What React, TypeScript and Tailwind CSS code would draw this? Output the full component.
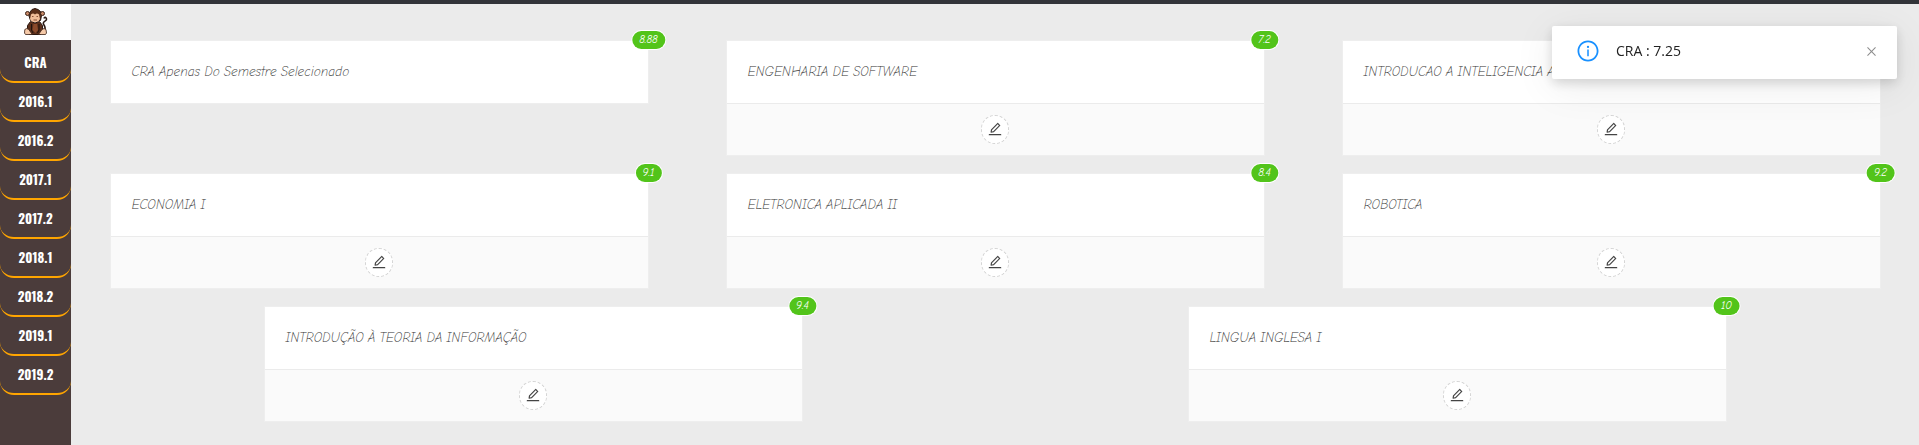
import { AiOutlineClose, AiOutlineEdit, AiOutlineInfoCircle } from "react-icons/ai";

type Course = { name: string; grade: string; editable: boolean };

const semesters = ["CRA", "2016.1", "2016.2", "2017.1", "2017.2", "2018.1", "2018.2", "2019.1", "2019.2"];

const courses: Course[] = [
  { name: "CRA Apenas Do Semestre Selecionado", grade: "8.88", editable: false },
  { name: "ENGENHARIA DE SOFTWARE", grade: "7.2", editable: true },
  { name: "INTRODUCAO A INTELIGENCIA ARTIFICIAL", grade: "8.9", editable: true },
  { name: "ECONOMIA I", grade: "9.1", editable: true },
  { name: "ELETRONICA APLICADA II", grade: "8.4", editable: true },
  { name: "ROBOTICA", grade: "9.2", editable: true },
  { name: "INTRODUÇÃO À TEORIA DA INFORMAÇÃO", grade: "9.4", editable: true },
  { name: "LINGUA INGLESA I", grade: "10", editable: true },
];

function Monkey() {
  return (
    <svg viewBox="0 0 24 28" className="h-7 w-6" role="img" aria-label="Logo">
      <path d="M17 25c4 0 4.500-2.500 4-5.500s-2.500-3-1.500-5 3.500-1.500 3-3.500-2-2.500-2.500-.5" fill="none" stroke="#2a1a14" strokeWidth="1.600" />
      <path d="M8 1.500 11 .5l3 1 2.500 2 1 4-1 5h-10L5 8l1-4z" fill="#5b2f1b" stroke="#2a1710" strokeWidth="1" />
      <circle cx="3.500" cy="5.500" r="2" fill="#c98a68" stroke="#3a2015" strokeWidth="1" />
      <circle cx="18.500" cy="5.500" r="2" fill="#c98a68" stroke="#3a2015" strokeWidth="1" />
      <path d="M7 6.500q2-2 4 0 2-2 4 0l1 4.500-2 3H8l-2-3z" fill="#f0bd99" />
      <path d="M8 8.500h1.500M12.500 8.500H14M9.500 12H13" stroke="#8a5338" strokeWidth="1" />
      <path d="M6.500 13.500 11 15l4.500-1.500 3 4v6l-2 3h-11l-2-3v-6z" fill="#5b2f1b" stroke="#2a1710" strokeWidth="1" />
      <path d="M9.500 16H13l1 6-2.500 3-3-3z" fill="#8a4a2b" />
      <path d="M7.500 16v6l1.500 3M15 16v6l-1.500 3" fill="none" stroke="#1f120d" strokeWidth="1" />
      <path d="M.8 21.500q2-2 4 0l3.500 5H1.500L.5 25zM22 21.500q-2-2-4 0l-3.500 5h7l1-1.500z" fill="#f5c9a8" stroke="#3a2015" strokeWidth=".8" />
    </svg>
  );
}

function CourseCard({ name, grade, editable }: Course) {
  return (
    <article className="relative w-[539px] self-start border border-[#eeeeee] bg-white">
      <h2 className="truncate px-[21px] py-5 font-['Comic_Neue','Lato','Open_Sans',sans-serif] text-[13px] leading-[22px] font-light text-[#333] italic">
        {name}
      </h2>
      {editable && (
        <div className="flex justify-center border-t border-[#ebebeb] bg-[#fafafa] py-[11px]">
          <button
            type="button"
            aria-label={`Editar ${name}`}
            className="flex h-[29px] w-7 items-center justify-center rounded-full border border-dashed border-[#d4d4d4] bg-white pb-0.5 text-[#444]"
          >
            <AiOutlineEdit className="size-4" />
          </button>
        </div>
      )}
      <span className="absolute -top-px -right-px translate-x-1/2 -translate-y-1/2 rounded-full bg-[#52c41a] px-[7px] font-['Comic_Neue','Lato',sans-serif] text-[11px] leading-[18px] whitespace-nowrap text-white italic shadow-[0_0_0_1px_#fff]">
        {grade}
      </span>
    </article>
  );
}

export default function App() {
  return (
    <div className="flex min-h-screen flex-col border-t-4 border-[#323439] bg-[#ebebeb]">
      <div className="flex grow">
        <aside className="w-[71px] shrink-0 bg-[#4b3c3b]">
          <a href="#inicio" className="flex h-9 items-center justify-center bg-white">
            <Monkey />
          </a>
          <nav className="flex flex-col pt-1">
            {semesters.map((label) => (
              <button
                key={label}
                type="button"
                className="h-[39px] rounded-b-[14px] border-b-2 border-[#ffa500] font-['Oswald','Roboto_Condensed','Open_Sans_Condensed','DejaVu_Sans_Condensed',sans-serif] text-[13px] font-bold text-white"
              >
                {label}
              </button>
            ))}
          </nav>
        </aside>
        <main className="flex grow flex-wrap content-start justify-around gap-y-[17px] pt-9 pb-5">
          {courses.map((course) => (
            <CourseCard key={course.name} {...course} />
          ))}
        </main>
      </div>
      <div
        role="status"
        className="fixed top-[26px] right-[22px] flex w-[345px] items-center rounded-xs bg-white pt-3.5 pr-[19px] pb-[17px] pl-6 font-['Open_Sans',sans-serif] text-[14px] leading-[22px] text-[#222] shadow-[0_4px_12px_rgba(0,0,0,0.15),0_8px_40px_rgba(0,0,0,0.08)]"
      >
        <AiOutlineInfoCircle className="-my-px size-6 text-[#1890ff]" />
        <span className="ml-4 grow">CRA : 7.25</span>
        <button type="button" aria-label="Fechar" className="text-[#8c8c8c]">
          <AiOutlineClose className="size-[13px]" />
        </button>
      </div>
    </div>
  );
}
